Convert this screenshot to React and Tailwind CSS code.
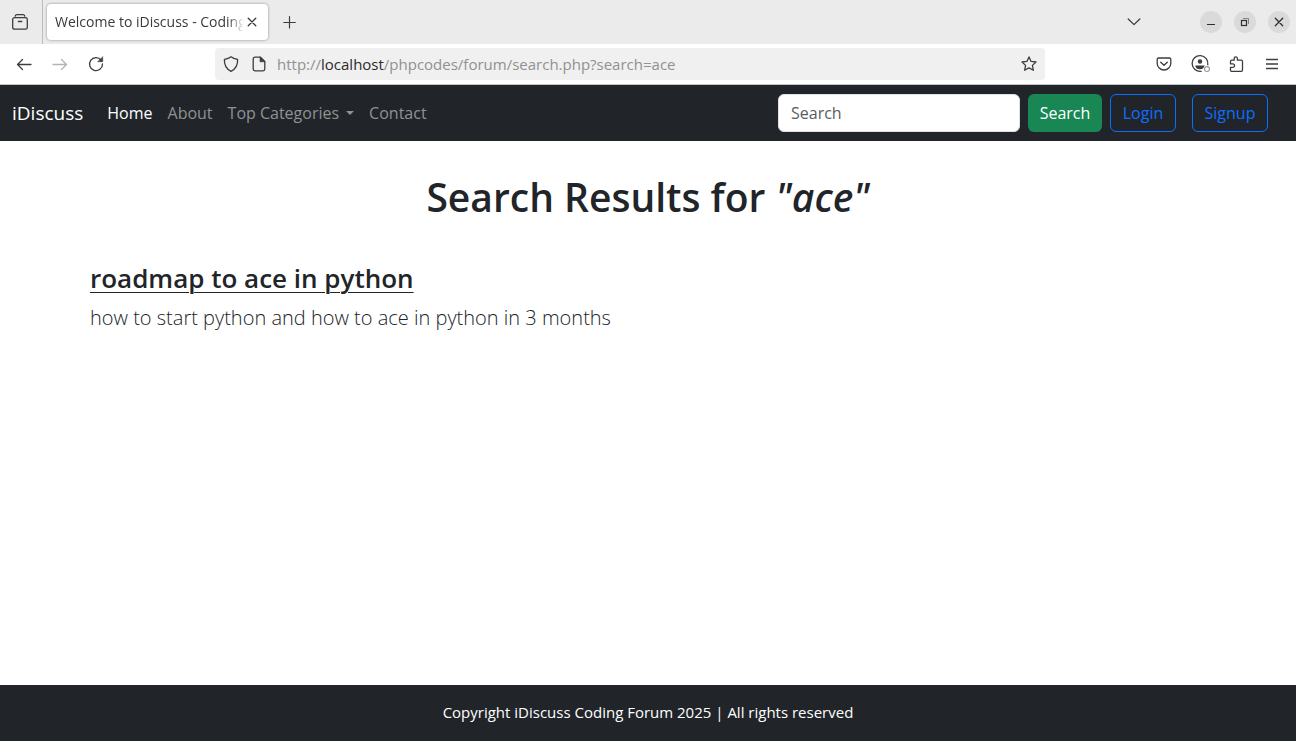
function Icon({ children, size = 16, className = "" }) {
  return (
    <svg
      width={size}
      height={size}
      viewBox="0 0 16 16"
      fill="none"
      stroke="currentColor"
      strokeWidth="1.3"
      strokeLinecap="round"
      strokeLinejoin="round"
      aria-hidden="true"
      className={"shrink-0 overflow-visible " + className}
    >
      {children}
    </svg>
  );
}

function ToolButton({ label, className = "", children }) {
  return (
    <button type="button" aria-label={label} className={"flex h-8 w-9 items-center justify-center " + className}>
      {children}
    </button>
  );
}

function WindowButton({ label, children }) {
  return (
    <button type="button" aria-label={label} className="flex size-[22px] items-center justify-center rounded-full bg-[#dadada] text-[#2e2e2e]">
      {children}
    </button>
  );
}

function TabStrip() {
  return (
    <div className="flex h-11 items-center bg-[#ebebeb] text-[#3d3d3d]">
      <div className="flex h-full w-[43px] items-center border-r border-[#bcbcbc] pl-3">
        <button type="button" aria-label="View recent browsing">
          <Icon className="block">
            <path d="M3.200 2.200C3.400 1.300 4 .7 5 .7h6c1 0 1.600.6 1.800 1.500" />
            <rect x=".7" y="3.700" width="14.600" height="11.500" rx="1.800" />
            <path d="M6.400 7.500h3.400" />
          </Icon>
        </button>
      </div>
      <div className="ml-1 flex h-9 w-[221px] items-center rounded bg-white px-2 shadow-[0_0_3px_rgba(0,0,0,0.4)]">
        <div className="min-w-0 flex-1 whitespace-nowrap text-sm leading-5 text-[#3a3a3a] [mask-image:linear-gradient(to_left,transparent,black_16px)]">
          Welcome to iDiscuss - Coding
        </div>
        <button type="button" aria-label="Close tab" className="flex size-4 items-center justify-center">
          <Icon size={10}>
            <path d="M2 2l12 12M14 2L2 14" strokeWidth="2.200" />
          </Icon>
        </button>
      </div>
      <button type="button" aria-label="New tab" className="ml-3.5">
        <Icon className="block">
          <path d="M7.500 2.500v11.500M1.800 8.500h11.500" strokeWidth="1.200" />
        </Icon>
      </button>
      <button type="button" aria-label="List all tabs" className="ml-auto mr-[58px]">
        <Icon className="block">
          <path d="M2.200 5L8 10.600 13.800 5" />
        </Icon>
      </button>
      <div className="mr-1.5 flex gap-3">
        <WindowButton label="Minimize">
          <Icon>
            <path d="M4 10.500h8" strokeLinecap="butt" strokeWidth="1" />
          </Icon>
        </WindowButton>
        <WindowButton label="Restore">
          <Icon>
            <g strokeWidth="1" strokeLinecap="butt" strokeLinejoin="miter">
              <rect x="4.500" y="6.500" width="5" height="5" strokeWidth="1.200" />
              <path d="M6 4.500h5.500V10" opacity=".5" />
            </g>
          </Icon>
        </WindowButton>
        <WindowButton label="Close">
          <Icon>
            <path d="M4.300 4.300l7.400 7.400M11.700 4.300l-7.400 7.400" />
          </Icon>
        </WindowButton>
      </div>
    </div>
  );
}

function Toolbar() {
  return (
    <div className="flex h-[41px] items-center border-b border-[#c4c4c4] bg-white px-1.5 text-[#3d3d3d]">
      <ToolButton label="Back">
        <Icon>
          <path d="M15 8.500H1.500M6.500 3.500l-5 5 5 5" />
        </Icon>
      </ToolButton>
      <ToolButton label="Forward" className="text-[#b3b3b3]">
        <Icon>
          <path d="M1 8.500h13.500M9.500 3.500l5 5-5 5" />
        </Icon>
      </ToolButton>
      <ToolButton label="Reload">
        <Icon>
          <path d="M13.200 4.200A6.500 6.500 0 1 0 14.500 8" />
          <path d="M14.700 1v4.700H10z" fill="currentColor" strokeWidth=".6" />
        </Icon>
      </ToolButton>
      <div className="mx-[101px] flex h-8 flex-1 items-center rounded bg-[#f0f0f0] px-2">
        <Icon>
          <path d="M8 .8c1.900 1.500 4 2.100 6.600 2.500.3 5.200-1.600 9.600-6.600 12-5-2.400-6.900-6.800-6.600-12C4 2.900 6.100 2.300 8 .8z" />
        </Icon>
        <Icon className="ml-3">
          <path d="M9.500 1.200H4A1.800 1.800 0 0 0 2.200 3v10A1.800 1.800 0 0 0 4 14.800h8a1.800 1.800 0 0 0 1.800-1.800V5.500z" />
          <path d="M9 1.200v4.600h4.700z" fill="currentColor" strokeWidth=".6" />
        </Icon>
        <div className="ml-2.5 flex-1 whitespace-nowrap text-[15px] leading-5 text-[#919191]">
          http://<span className="text-[#2b2b2b]">localhost</span>/phpcodes/forum/search.php?search=ace
        </div>
        <button type="button" aria-label="Bookmark this page">
          <Icon className="block">
            <path d="M8 .9l2.100 4.500 4.900.6-3.600 3.400 1 4.900L8 11.900l-4.400 2.400 1-4.900L1 6l4.900-.6z" />
          </Icon>
        </button>
      </div>
      <ToolButton label="Save to Pocket">
        <Icon>
          <path d="M2.700 2h10.600a1.500 1.500 0 0 1 1.500 1.500v3.700a6.800 6.800 0 0 1-13.600 0V3.500A1.500 1.500 0 0 1 2.700 2z" />
          <path d="M4.700 6.200L8 9.300l3.300-3.100" />
        </Icon>
      </ToolButton>
      <ToolButton label="Account">
        <Icon size={18}>
          <path d="M9 14.500A7 7 0 1 1 14.900 8.800" strokeWidth="1.200" />
          <circle cx="8" cy="5.700" r="2" fill="currentColor" stroke="none" />
          <path d="M3.800 9.300h8.400c0 2-1.600 3.300-4.200 3.300s-4.200-1.300-4.200-3.300z" fill="currentColor" stroke="none" />
          <circle cx="14.200" cy="12.500" r="3.200" fill="white" stroke="none" />
          <circle cx="14.200" cy="12.500" r="2.200" stroke="#999999" strokeWidth="1" />
        </Icon>
      </ToolButton>
      <ToolButton label="Extensions">
        <Icon>
          <path d="M6.200 4.200V2.500a1.600 1.600 0 0 1 3.200 0v1.700h3.900a1.200 1.200 0 0 1 1.200 1.200v8.700a1.200 1.200 0 0 1-1.200 1.200H3.500a1 1 0 0 1-1-1v-3h2.400a1.700 1.700 0 0 0 0-3.400H2.500V5.400a1.200 1.200 0 0 1 1.200-1.200z" />
        </Icon>
      </ToolButton>
      <ToolButton label="Open application menu">
        <Icon>
          <path d="M2 3.500h12M2 8h12M2 12.500h12" strokeWidth="1.300" strokeLinecap="butt" />
        </Icon>
      </ToolButton>
    </div>
  );
}

function SiteNav() {
  return (
    <nav className="flex h-14 items-center bg-[#212529] pl-3 pr-7 leading-6">
      <a href="#home" className="mr-6 text-[19px] leading-7 text-white">iDiscuss</a>
      <ul className="flex gap-[15px] text-[#909294]">
        <li><a href="#home" className="text-white">Home</a></li>
        <li><a href="#about">About</a></li>
        <li>
          <button type="button" className="flex items-center gap-[7px]">
            Top Categories
            <svg width="8" height="4" viewBox="0 0 8 4" fill="currentColor" aria-hidden="true">
              <path d="M0 0h8L4 4z" />
            </svg>
          </button>
        </li>
        <li><a href="#contact">Contact</a></li>
      </ul>
      <form className="ml-auto flex gap-2" onSubmit={(e) => e.preventDefault()}>
        <input
          type="search"
          aria-label="Search"
          placeholder="Search"
          className="h-[38px] w-[242px] rounded-md border border-[#dee2e6] bg-white px-3 text-[#212529] placeholder:text-[#595c5f]"
        />
        <button type="submit" className="h-[38px] w-[74px] rounded-md bg-[#198754] text-white">Search</button>
      </form>
      <button type="button" className="ml-2 h-[38px] w-[66px] rounded-md border border-[#0d6efd] text-[#0d6efd]">Login</button>
      <button type="button" className="ml-4 h-[38px] w-[76px] rounded-md border border-[#0d6efd] text-[#0d6efd]">Signup</button>
    </nav>
  );
}

export default function App() {
  return (
    <div className="flex min-h-screen flex-col bg-white font-['Open_Sans','Noto_Sans',sans-serif] text-[#212529]">
      <TabStrip />
      <Toolbar />
      <SiteNav />
      <main className="mx-auto w-full max-w-[1140px] flex-1 px-3 pt-8">
        <h1 className="text-center text-[39px] font-semibold leading-[48px]">
          Search Results for <em>"ace"</em>
        </h1>
        <article className="mt-10">
          <h3 className="text-[26px] font-semibold leading-[34px]">
            <a href="#thread" className="underline decoration-1 underline-offset-4">roadmap to ace in python</a>
          </h3>
          <p className="mt-2 text-xl font-light leading-[30px]">how to start python and how to ace in python in 3 months</p>
        </article>
      </main>
      <footer className="flex h-14 items-center justify-center bg-[#212529] pb-0.5 text-[15px] leading-6 text-white">
        <p>Copyright iDiscuss Coding Forum 2025 | All rights reserved</p>
      </footer>
    </div>
  );
}
